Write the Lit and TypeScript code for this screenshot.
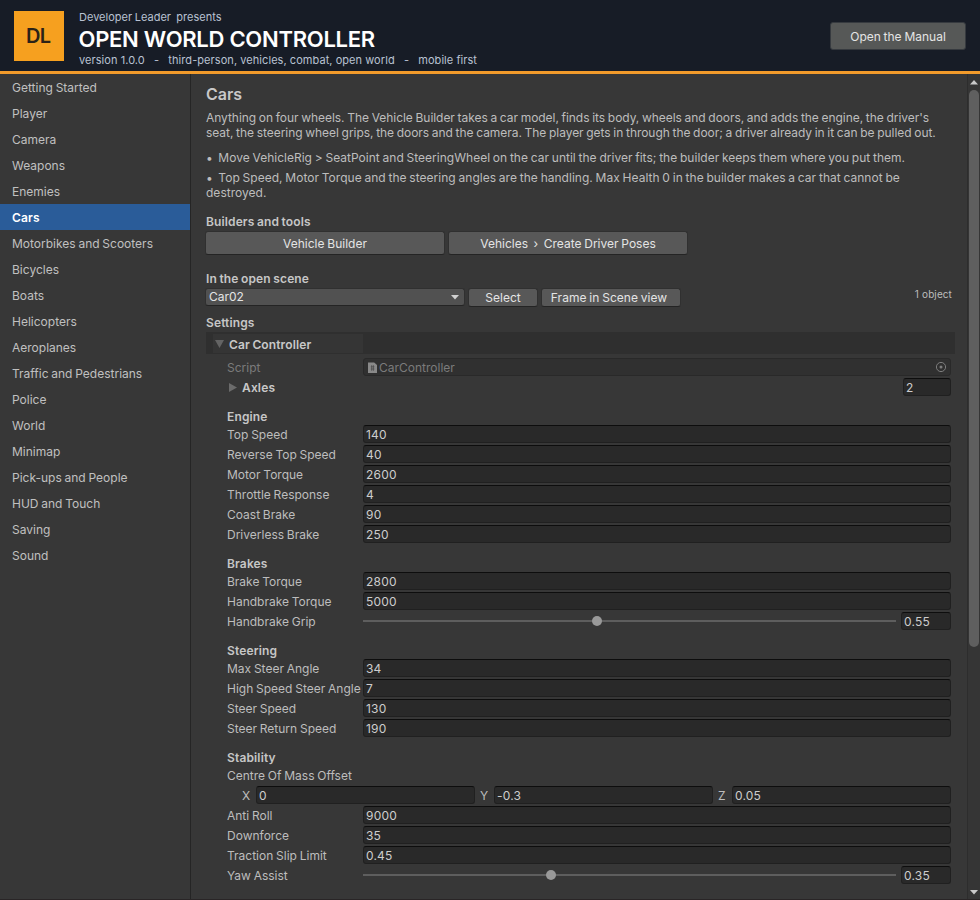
import { LitElement, html, css, svg } from "lit";
import { customElement, property } from "lit/decorators.js";
import { classMap } from "lit/directives/class-map.js";
import { styleMap } from "lit/directives/style-map.js";

type Field =
  | { kind: "text"; label: string; value: string }
  | { kind: "slider"; label: string; value: string; ratio: number }
  | { kind: "vector"; label: string; value: [string, string][] };

const PAGES = [
  "Getting Started", "Player", "Camera", "Weapons", "Enemies", "Cars",
  "Motorbikes and Scooters", "Bicycles", "Boats", "Helicopters", "Aeroplanes",
  "Traffic and Pedestrians", "Police", "World", "Minimap", "Pick-ups and People",
  "HUD and Touch", "Saving", "Sound",
];

const text = (label: string, value: string): Field => ({ kind: "text", label, value });

const GROUPS: { title: string; fields: Field[] }[] = [
  {
    title: "Engine",
    fields: [
      text("Top Speed", "140"),
      text("Reverse Top Speed", "40"),
      text("Motor Torque", "2600"),
      text("Throttle Response", "4"),
      text("Coast Brake", "90"),
      text("Driverless Brake", "250"),
    ],
  },
  {
    title: "Brakes",
    fields: [
      text("Brake Torque", "2800"),
      text("Handbrake Torque", "5000"),
      { kind: "slider", label: "Handbrake Grip", value: "0.55", ratio: 0.439 },
    ],
  },
  {
    title: "Steering",
    fields: [
      text("Max Steer Angle", "34"),
      text("High Speed Steer Angle", "7"),
      text("Steer Speed", "130"),
      text("Steer Return Speed", "190"),
    ],
  },
  {
    title: "Stability",
    fields: [
      { kind: "vector", label: "Centre Of Mass Offset", value: [["X", "0"], ["Y", "-0.3"], ["Z", "0.05"]] },
      text("Anti Roll", "9000"),
      text("Downforce", "35"),
      text("Traction Slip Limit", "0.45"),
      { kind: "slider", label: "Yaw Assist", value: "0.35", ratio: 0.353 },
    ],
  },
];

const triangle = (points: string, w: number, h: number) =>
  html`<svg class="tri" width=${w} height=${h} viewBox="0 0 ${w} ${h}">${svg`<polygon points=${points} fill="currentColor"/>`}</svg>`;

@customElement("app-header")
export class AppHeader extends LitElement {
  static styles = css`
    :host {
      display: flex;
      flex: none;
      box-sizing: border-box;
      height: 74px;
      padding: 0 14px 0 14px;
      background: #171c26;
      border-bottom: 3px solid #f29b2b;
    }
    .logo {
      width: 50px;
      height: 50px;
      margin-top: 11px;
      background: #f6a01f;
      color: #2b2217;
      font-size: 20px;
      font-weight: 600;
      line-height: 50px;
      letter-spacing: -0.7px;
      text-align: center;
      text-indent: -1.5px;
    }
    .titles { flex: 1; margin: 9px 0 0 15px; color: #b9c2d2; font-size: 11px; }
    .line { height: 16px; line-height: 16px; white-space: pre; letter-spacing: 0; word-spacing: -0.4px; }
    .version { letter-spacing: 0.07px; word-spacing: -0.1px; }
    .name {
      height: 27px;
      margin-left: -0.5px;
      color: #fff;
      font-size: 22px;
      font-weight: 600;
      line-height: 29px;
      letter-spacing: -0.27px;
      word-spacing: 0;
    }
    .manual {
      width: 136px;
      height: 28px;
      margin-top: 22px;
      box-sizing: border-box;
      border: 1px solid #363a3f;
      border-radius: 3px;
      background: #565857;
      color: #e4e4e4;
      line-height: 27px;
      text-align: center;
    }
  `;
  render() {
    return html`
      <div class="logo">DL</div>
      <div class="titles">
        <div class="line">Developer Leader  presents</div>
        <div class="name">OPEN WORLD CONTROLLER</div>
        <div class="line version">version 1.0.0   -   third-person, vehicles, combat, open world   -   mobile first</div>
      </div>
      <div class="manual">Open the Manual</div>
    `;
  }
}

@customElement("app-nav")
export class AppNav extends LitElement {
  @property() current = "";
  static styles = css`
    :host { display: block; flex: none; width: 190px; border-right: 1px solid #252525; }
    .item { height: 26px; padding-left: 12px; line-height: 28px; color: #c0c0c0; }
    .active { background: #2a5c99; color: #fff; font-weight: 600; letter-spacing: 0.15px; }
  `;
  render() {
    return PAGES.map(
      (p) => html`<div class=${classMap({ item: true, active: p === this.current })}>${p}</div>`,
    );
  }
}

@customElement("car-inspector")
export class CarInspector extends LitElement {
  static styles = css`
    :host { display: block; }
    .bar {
      display: flex;
      height: 22px;
      background: #2f2f2f;
    }
    .fold {
      display: flex;
      align-items: center;
      box-sizing: border-box;
      width: 150px;
      height: 19px;
      margin: 2px 0 0 7px;
      padding: 1px 0 0 2px;
      background: #353535;
      color: #c8c8c8;
      font-weight: 600;
      letter-spacing: 0.12px;
      line-height: 18px;
    }
    .fold span { height: 18px; line-height: 20px; }
    .fold .tri { color: #646464; margin-right: 5px; }
    .rows { display: flex; flex-direction: column; gap: 2px; padding: 4px 4px 0 21px; }
    .row { display: flex; height: 18px; line-height: 20px; color: #bdbdbd; white-space: nowrap; }
    .label { width: 136px; flex: none; }
    .input {
      flex: 1;
      box-sizing: border-box;
      height: 18px;
      padding-left: 2px;
      border: 1px solid #202020;
      border-top-color: #0d0d0d;
      border-radius: 3px;
      background: #292929;
      color: #cdcdcd;
      line-height: 18px;
      letter-spacing: 0.2px;
    }
    .title { height: 16px; margin-top: 9px; line-height: 19px; font-weight: 600; letter-spacing: 0.15px; color: #c6c6c6; }
    .row.script { color: #7b7b7b; }
    .object {
      display: flex;
      align-items: center;
      flex: 1;
      box-sizing: border-box;
      height: 18px;
      padding: 0 3px 0 3.5px;
      border: 1px solid #292929;
      border-radius: 3px;
      background: #303030;
      gap: 2.5px;
    }
    .object span { flex: 1; height: 16px; line-height: 18px; }
    .axles { align-items: center; color: #c8c8c8; font-weight: 600; letter-spacing: 0.15px; }
    .axles .tri { color: #6b6b6b; margin: 0 5px 0 2px; }
    .axles span { flex: 1; height: 18px; line-height: 20px; }
    .count { flex: none; width: 48px; font-weight: 400; }
    .slider { flex: 1; display: flex; align-items: center; margin-right: 5px; height: 18px; }
    .track { position: relative; width: 100%; height: 2px; background: #5e5e5e; }
    .knob {
      position: absolute;
      top: -4px;
      width: 10px;
      height: 10px;
      margin-left: -5px;
      border-radius: 50%;
      background: #999;
    }
    .amount { flex: none; width: 50px; }
    .vector { padding-left: 15px; }
    .axis { display: flex; flex: 1; }
    .axis + .axis { margin-left: 5px; }
    .axis span { width: 14px; }
  `;

  private field(f: Field) {
    if (f.kind === "vector") {
      return html`
        <div class="row">${f.label}</div>
        <div class="row vector">
          ${f.value.map(([a, v]) => html`<div class="axis"><span>${a}</span><div class="input">${v}</div></div>`)}
        </div>`;
    }
    return html`<div class="row">
      <div class="label">${f.label}</div>
      ${f.kind === "text"
        ? html`<div class="input">${f.value}</div>`
        : html`<div class="slider"><div class="track">
              <div class="knob" style=${styleMap({ left: `${f.ratio * 100}%` })}></div></div></div>
            <div class="input amount">${f.value}</div>`}
    </div>`;
  }

  render() {
    return html`
      <div class="bar"><div class="fold">${triangle("0,0 9,0 4.5,8", 9, 8)}<span>Car Controller</span></div></div>
      <div class="rows">
        <div class="row script">
          <div class="label">Script</div>
          <div class="object">
            <svg width="9" height="11" viewBox="0 0 9 11">
              <path d="M0 .5h6.2L9 3v8H0z" fill="#898989" />
              <path d="M3.7 3.2v5.6M5.4 3.2v5.6M2.8 4.8h3.6M2.8 7h3.6" stroke="#4d4d4d" stroke-width=".8" />
            </svg>
            <span>CarController</span>
            <svg width="12" height="12" viewBox="0 0 12 12">
              <circle cx="6" cy="6" r="4.6" fill="none" stroke="#7d7d7d" />
              <circle cx="6" cy="6" r="1.5" fill="#7d7d7d" />
            </svg>
          </div>
        </div>
        <div class="row axles">${triangle("0,0 8,4.5 0,9", 8, 9)}<span>Axles</span><div class="input count">2</div></div>
        ${GROUPS.map((g) => html`<div class="title">${g.title}</div>${g.fields.map((f) => this.field(f))}`)}
      </div>
    `;
  }
}

@customElement("car-page")
export class CarPage extends LitElement {
  static styles = css`
    :host { display: block; flex: 1; min-width: 0; padding: 0 12px 0 15px; color: #bdbdbd; }
    h1 { margin: 10px 0 0; font-size: 16px; font-weight: 600; line-height: 21px; color: #c8c8c8; letter-spacing: 0; }
    p { margin: 0; line-height: 15px; white-space: pre; }
    .intro { margin-top: 5px; letter-spacing: -0.045px; }
    .first { margin-top: 10px; letter-spacing: 0.01px; }
    .second { margin-top: 5px; letter-spacing: 0.02px; }
    h2 { margin: 0; font-size: 12px; font-weight: 600; line-height: 16px; color: #c6c6c6; letter-spacing: 0.12px; }
    .tools { margin-top: 14px; }
    .scene { margin-top: 16px; }
    .settings { margin: 8px 0 1px; }
    .line { display: flex; gap: 3px; margin: 1px 0 0 -1px; }
    .button, .select {
      box-sizing: border-box;
      border: 1px solid #303030;
      border-bottom-color: #242424;
      border-radius: 3px;
      background: #585858;
      color: #e4e4e4;
      text-align: center;
      white-space: pre;
    }
    .tall { width: 240px; height: 24px; line-height: 24px; }
    .small { height: 19px; line-height: 18px; }
    .w70 { width: 70px; }
    .w140 { width: 140px; padding-right: 4px; letter-spacing: 0.03px; }
    .select {
      display: flex;
      align-items: center;
      justify-content: space-between;
      width: 260px;
      height: 18px;
      padding: 0 5px 0 3px;
      background: #515151;
      line-height: 16px;
    }
    .select .tri { color: #d0d0d0; }
    .total { flex: 1; margin-right: 3px; text-align: right; font-size: 10px; line-height: 13px; letter-spacing: 0.1px; word-spacing: 0.3px; }
  `;
  render() {
    return html`
      <h1>Cars</h1>
      <p class="intro">Anything on four wheels. The Vehicle Builder takes a car model, finds its body, wheels and doors, and adds the engine, the driver's
seat, the steering wheel grips, the doors and the camera. The player gets in through the door; a driver already in it can be pulled out.</p>
      <p class="first">•  Move VehicleRig &gt; SeatPoint and SteeringWheel on the car until the driver fits; the builder keeps them where you put them.</p>
      <p class="second">•  Top Speed, Motor Torque and the steering angles are the handling. Max Health 0 in the builder makes a car that cannot be
destroyed.</p>
      <h2 class="tools">Builders and tools</h2>
      <div class="line">
        <div class="button tall">Vehicle Builder</div>
        <div class="button tall">Vehicles  ›  Create Driver Poses</div>
      </div>
      <h2 class="scene">In the open scene</h2>
      <div class="line">
        <div class="select"><span>Car02</span>${triangle("0,0 8,0 4,4.5", 8, 5)}</div>
        <div class="button small w70">Select</div>
        <div class="button small w140">Frame in Scene view</div>
        <div class="total">1 object</div>
      </div>
      <h2 class="settings">Settings</h2>
      <car-inspector></car-inspector>
    `;
  }
}

@customElement("app-root")
export class AppRoot extends LitElement {
  static styles = css`
    :host {
      display: flex;
      flex-direction: column;
      box-sizing: border-box;
      width: 980px;
      height: 900px;
      overflow: hidden;
      background: #373737;
      border-bottom: 1px solid #292526;
      font: 12px Inter, sans-serif;
      letter-spacing: 0;
      word-spacing: -0.6px;
    }
    .body { display: flex; flex: 1; min-height: 0; }
    .scrollbar {
      display: flex;
      flex-direction: column;
      align-items: center;
      box-sizing: border-box;
      flex: none;
      width: 13px;
      padding: 6px 0 4px;
      border-left: 1px solid #2d2d2d;
      background: #353535;
      color: #c9c9c9;
    }
    .well { flex: 1; width: 10px; padding-top: 5px; }
    .thumb { height: 557px; border-radius: 5px; background: #5f5f5f; }
  `;
  render() {
    return html`
      <app-header></app-header>
      <div class="body">
        <app-nav current="Cars"></app-nav>
        <car-page></car-page>
        <div class="scrollbar">
          ${triangle("0,4.5 4,0 8,4.5", 8, 5)}
          <div class="well"><div class="thumb"></div></div>
          ${triangle("0,0 8,0 4,4.5", 8, 5)}
        </div>
      </div>
    `;
  }
}
